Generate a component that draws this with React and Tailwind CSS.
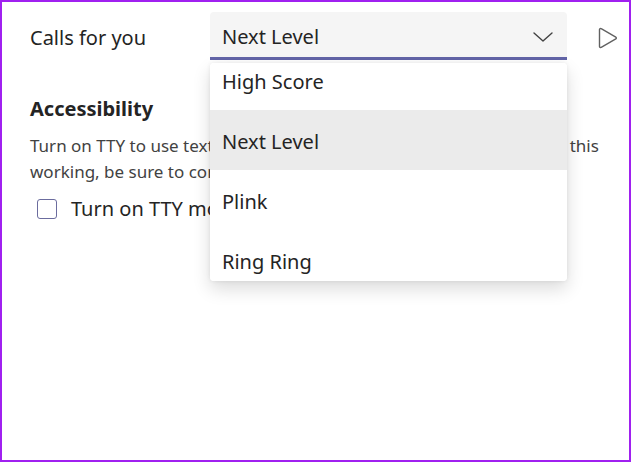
import React from "react";

const ringtones = ["High Score", "Next Level", "Plink", "Ring Ring"];

// Chevron for the select field
const Chevron = () => (
  <svg width="20" height="10" viewBox="0 0 20 10" fill="none">
    <path d="M1 1l9 8 9-8" stroke="#424242" strokeWidth="1.4" strokeLinecap="round" strokeLinejoin="round" />
  </svg>
);

// Outlined play button used to preview a ringtone
const PlayIcon = () => (
  <svg width="22" height="22" viewBox="0 0 22 22" fill="none">
    <path
      d="M2.5 2.6v16.8c0 .9 1 1.4 1.7.9l14.6-8.4c.7-.4.7-1.4 0-1.8L4.2 1.7c-.7-.5-1.7 0-1.7.9z"
      stroke="#616161"
      strokeWidth="1.4"
      strokeLinejoin="round"
    />
  </svg>
);

export default function App() {
  const selected = "Next Level";

  return (
    <div
      className="relative w-[631px] h-[462px] bg-white border-2 border-[#a020f0] overflow-hidden text-[#242424]"
      style={{ fontFamily: '"Noto Sans", "Open Sans", sans-serif' }}
    >
      {/* Ringtone row */}
      <div className="flex items-start pt-[10px] pl-[28px]">
        <span className="w-[180px] pt-[2px] text-[20px] leading-[48px]">Calls for you</span>
        <div className="w-[357px] h-[48px] flex items-center justify-between pl-3 pr-[14px] pt-[4px] bg-[#f5f5f5] rounded-t-[4px] border-b-[3px] border-[#6264a7]">
          <span className="text-[20px]">{selected}</span>
          <Chevron />
        </div>
        <div className="ml-[30px] h-[48px] pt-[3px] flex items-center">
          <PlayIcon />
        </div>
      </div>

      {/* Accessibility section */}
      <div className="pl-[28px] pt-[33px] pr-[20px]">
        <h2 className="text-[20px] font-bold leading-[28px]">Accessibility</h2>
        <p className="mt-[10px] text-[17px] leading-[26px] text-[#424242]">
          Turn on TTY to use text to communicate over the phone line. To get this
          <br />
          working, be sure to connect a TTY device.
        </p>
        <label className="mt-[9px] ml-[7px] flex items-center gap-[14px]">
          <span className="w-[20px] h-[20px] rounded-[3px] border-[1.5px] border-[#6b6c9e]" />
          <span className="text-[20px]">Turn on TTY mode</span>
        </label>
      </div>

      {/* Open ringtone list */}
      <div className="absolute left-[208px] top-[61px] w-[357px] h-[218px] bg-white rounded-[4px] overflow-hidden shadow-[0_8px_18px_rgba(0,0,0,0.14),0_0_4px_rgba(0,0,0,0.08)]">
        <div className="-mt-[13px]">
          {ringtones.map((name) => (
            <div
              key={name}
              className={`h-[60px] flex items-center pl-3 pt-[4px] text-[20px] ${
                name === selected ? "bg-[#ebebeb]" : "bg-white"
              }`}
            >
              {name}
            </div>
          ))}
        </div>
      </div>
    </div>
  );
}
